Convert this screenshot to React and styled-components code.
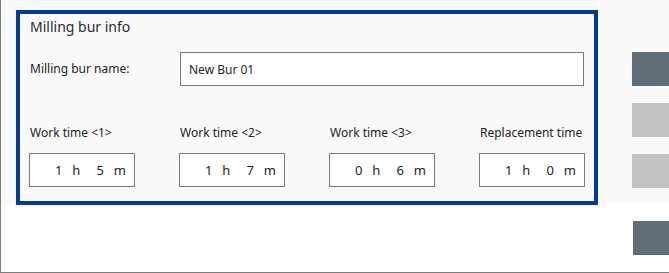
import React from 'react';
import styled, { createGlobalStyle } from 'styled-components';

const GlobalStyle = createGlobalStyle`
	html, body {
		margin: 0;
		padding: 0;
		background: #ffffff;
	}
	body {
		font-family: "Noto Sans", "Open Sans", sans-serif;
		color: #1e1e1e;
	}
`;

const Frame = styled.div`
	width: 669px;
	height: 273px;
	box-sizing: border-box;
	border-left: 1px solid #7c7c7c;
	border-bottom: 1px solid #7c7c7c;
	overflow: hidden;
	display: flex;
	flex-direction: column;
`;

const TopRow = styled.div`
	display: flex;
	gap: 2px;
	height: 205px;
`;

const LeftPanel = styled.div`
	width: 597px;
	flex-shrink: 0;
	background: #fafafa;
	padding: 10px 0 0 15px;
	box-sizing: border-box;
`;

const InfoBox = styled.section`
	width: 582px;
	height: 195px;
	box-sizing: border-box;
	border: 4px solid #023a97;
	background: #fafafa;
	padding: 3px 9px 0 9px;
`;

const Title = styled.h2`
	margin: 0 0 0 1px;
	font-size: 14px;
	font-weight: 400;
	line-height: 20px;
	color: #2a2a2a;
`;

const NameRow = styled.div`
	display: flex;
	align-items: center;
	margin-top: 15px;
`;

const Label = styled.label`
	font-size: 12px;
	line-height: 16px;
	color: #222;
	white-space: nowrap;
	margin-left: 1px;
	width: ${(p) => p.$width || 'auto'};
	flex-shrink: 0;
`;

const TextField = styled.div`
	width: 404px;
	height: 34px;
	box-sizing: border-box;
	border: 1px solid #7a7a7a;
	background: #ffffff;
	display: flex;
	align-items: center;
	padding-left: 8px;
	font-size: 12px;
	color: #1e1e1e;
`;

const TimeGrid = styled.div`
	display: grid;
	grid-template-columns: repeat(4, 106px);
	column-gap: 44px;
	row-gap: 12px;
	margin-top: 39px;
`;

const TimeField = styled.div`
	height: 34px;
	box-sizing: border-box;
	border: 1px solid #7a7a7a;
	background: #ffffff;
	display: flex;
	align-items: center;
	justify-content: flex-end;
	padding-right: 8px;
	font-size: 13px;
	color: #1e1e1e;
`;

const Num = styled.span`
	margin-left: ${(p) => (p.$first ? '0' : '16px')};
`;

const Unit = styled.span`
	margin-left: 10px;
`;

const SidePanel = styled.div`
	flex: 1;
	background: #fafafa;
	height: 204px;
	padding: 52px 0 0 32px;
	box-sizing: border-box;
	display: flex;
	flex-direction: column;
	gap: 17px;
`;

const SideButton = styled.button`
	width: 48px;
	height: 34px;
	flex-shrink: 0;
	border: none;
	padding: 0;
	background: ${(p) => (p.$dark ? '#616e78' : '#c3c3c3')};
`;

const BottomRow = styled.div`
	display: flex;
	padding: 16px 0 0 632px;
`;

const times = [
	{ label: 'Work time <1>', h: 1, m: 5 },
	{ label: 'Work time <2>', h: 1, m: 7 },
	{ label: 'Work time <3>', h: 0, m: 6 },
	{ label: 'Replacement time', h: 1, m: 0 },
];

const App = () => {
	return (
		<>
			<GlobalStyle />
			<Frame>
				<TopRow>
					<LeftPanel>
						<InfoBox>
							<Title>Milling bur info</Title>
							<NameRow>
								<Label $width="150px">Milling bur name:</Label>
								<TextField>New Bur 01</TextField>
							</NameRow>
							<TimeGrid>
								{times.map((t) => (
									<Label key={t.label}>{t.label}</Label>
								))}
								{times.map((t) => (
									<TimeField key={t.label + '-f'}>
										<Num $first>{t.h}</Num>
										<Unit>h</Unit>
										<Num>{t.m}</Num>
										<Unit>m</Unit>
									</TimeField>
								))}
							</TimeGrid>
						</InfoBox>
					</LeftPanel>
					<SidePanel>
						<SideButton $dark />
						<SideButton />
						<SideButton />
					</SidePanel>
				</TopRow>
				<BottomRow>
					<SideButton $dark />
				</BottomRow>
			</Frame>
		</>
	);
};

export default App;
